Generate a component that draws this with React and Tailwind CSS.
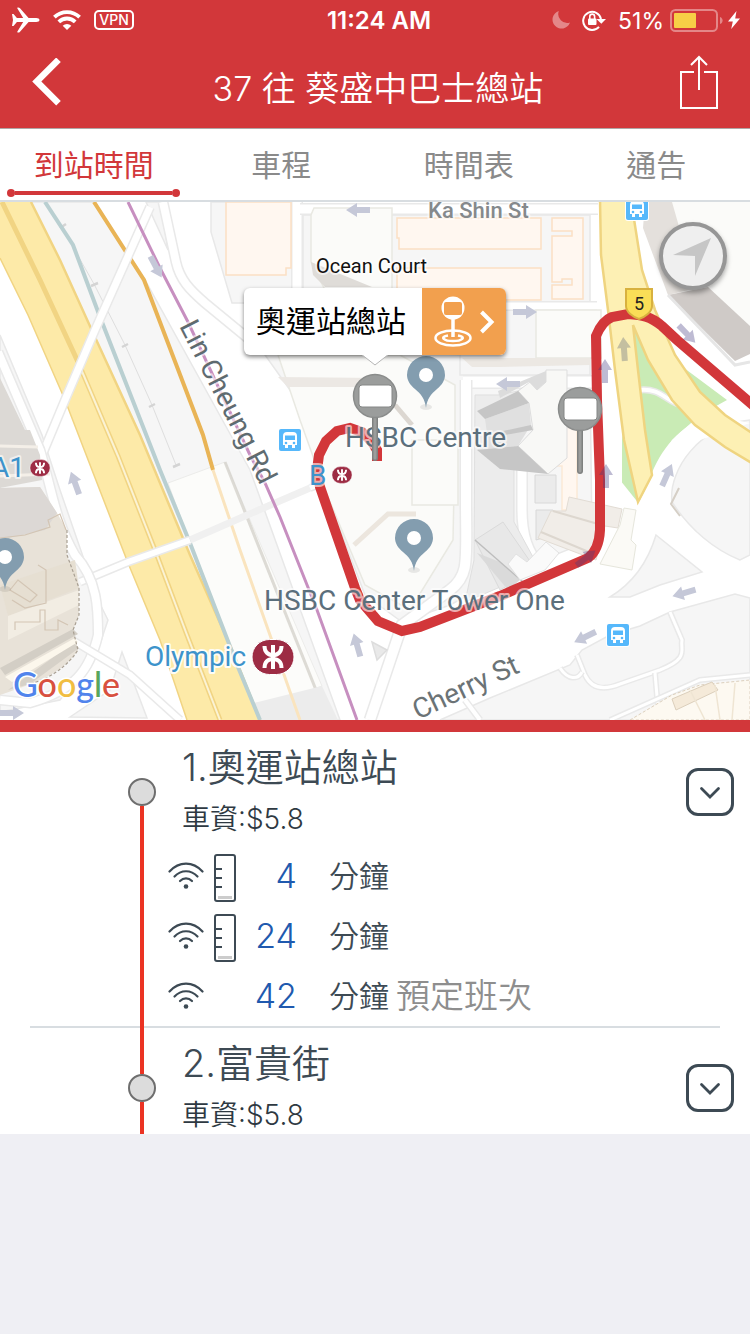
import React, { useState } from 'react';

const TABS = ['到站時間', '車程', '時間表', '通告'];

const STOPS = [
  {
    name: '1.奧運站總站',
    fare: '車資:$5.8',
    arrivals: [
      { minutes: 4, load: true, note: '' },
      { minutes: 24, load: true, note: '' },
      { minutes: 42, load: false, note: '預定班次' },
    ],
  },
  { name: '2.富貴街', fare: '車資:$5.8', arrivals: [] },
];

// Traffic direction arrows on the map: position and angle
const ARROWS = [
  { x: 358, y: 210, angle: 180 },
  { x: 156, y: 267, angle: 62 },
  { x: 525, y: 312, angle: 0 },
  { x: 508, y: 384, angle: 180 },
  { x: 75, y: 483, angle: -110 },
  { x: 357, y: 645, angle: -106 },
  { x: 12, y: 713, angle: 0 },
  { x: 667, y: 475, angle: -66 },
  { x: 684, y: 593, angle: 164 },
  { x: 585, y: 637, angle: 154 },
];

const ROUTE_ARROWS = [
  { x: 605, y: 371, angle: -90 },
  { x: 606, y: 476, angle: -90 },
  { x: 687, y: 334, angle: 46 },
  { x: 586, y: 558, angle: -38 },
];

/**
 * Status bar with time, network and battery
 */
const StatusBar = () => (
  <div className="grid h-10 grid-cols-3 items-center pl-3 pr-2 text-white">
    <div className="flex items-center">
      <svg className="h-[26px] w-[28px]" viewBox="0 0 28 26" fill="currentColor">
        <path d="M0 7h1.500l3.400 3.900 6.300.1L5.400 1.400C5 .6 5.400.4 6.200.4c.8 0 1.300.3 1.800.9l8.600 9.700h7.600c2 0 3.300.9 3.300 2s-1.300 2-3.300 2h-7.600L8 24.700c-.5.6-1 .9-1.800.9-.8 0-1.200-.2-.8-1L11.200 15l-6.300.1L1.500 19H0l1-6z" />
      </svg>
      <svg className="ml-[13px] h-[20px] w-[28px]" viewBox="0 0 28 20" fill="none" stroke="currentColor" strokeWidth="3.800">
        <path d="M1.400 7.200a18 18 0 0 1 25.200 0" />
        <path d="M5.800 11.800a11.800 11.800 0 0 1 16.400 0" />
        <path d="M14 20l-4.300-4.300a6.200 6.200 0 0 1 8.600 0z" fill="currentColor" stroke="none" />
      </svg>
      <span className="ml-[13px] flex h-5 w-10 items-center justify-center rounded-[5px] border-2 border-white text-sm font-medium">
        VPN
      </span>
    </div>
    <div className="pt-[2px] pl-1 whitespace-nowrap text-center text-[24px] leading-[32px] font-semibold">11:24 AM</div>
    <div className="flex items-center justify-end">
      <svg className="h-[18px] w-[18px] opacity-40" viewBox="0 0 18 18" fill="currentColor">
        <path d="M6.800 0A9 9 0 1 0 18 11.600 9 9 0 0 1 6.800 0z" />
      </svg>
      <svg className="ml-[12px] h-[22px] w-[24px]" viewBox="0 0 24 22" fill="none" stroke="currentColor" strokeWidth="2">
        <path d="M17 17.800A9 9 0 1 1 19 10" />
        <path d="M14.500 10H24l-4.700 4.800z" fill="currentColor" stroke="none" />
        <rect x="6" y="9.500" width="8.500" height="6.500" rx="1" fill="currentColor" stroke="none" />
        <path d="M7.800 10V7.500a2.400 2.400 0 0 1 4.800 0V10" strokeWidth="1.600" />
      </svg>
      <span className="ml-3 pt-[2px] text-[23px] leading-[32px]">51%</span>
      <svg className="ml-[6px] h-[23px] w-[54px]" viewBox="0 0 54 23">
        <rect x="1" y="1" width="46" height="21" rx="4.500" fill="none" stroke="white" strokeOpacity="0.4" strokeWidth="2" />
        <rect x="4" y="4" width="22" height="15" rx="1" fill="#f7cf46" />
        <path d="M50 8c3.500 1 3.500 6 0 7z" fill="white" fillOpacity="0.4" />
      </svg>
      <svg className="ml-1 mr-[2px] h-[18px] w-[12px]" viewBox="0 0 12 18" fill="currentColor">
        <path d="M8.500 0L0 10.500h4.800L3.200 18 12 7.500H7.200z" />
      </svg>
    </div>
  </div>
);

const NavBar = () => (
  <div className="flex h-[88px] items-center justify-between text-white">
    <button className="flex h-full w-24 items-center pb-[2px] pl-8" aria-label="返回">
      <svg className="h-[50px] w-[30px]" viewBox="0 0 30 50" fill="none" stroke="currentColor" strokeWidth="6.500">
        <path d="M26.500 1.800L4.800 23.500l21.700 21.700" />
      </svg>
    </button>
    <h1 className="pt-[10px] text-[34px] leading-[44px] font-[350]">37 往 葵盛中巴士總站</h1>
    <button className="flex h-full w-[90px] items-center justify-end pr-[30px] pb-1" aria-label="分享">
      <svg className="h-[54px] w-[42px]" viewBox="0 0 42 54" fill="none" stroke="currentColor" strokeWidth="2">
        <path d="M16 17H3v36h36V17H26" />
        <path d="M21 35V2M13 10l8-8 8 8" />
      </svg>
    </button>
  </div>
);

const TabBar = ({ active, onChange }) => (
  <nav className="grid grid-cols-4 border-t border-b-2 border-t-[#b0a6a6] border-b-[#d8dde1] bg-white" role="tablist">
    {TABS.map((tab, index) => (
      <button
        key={tab}
        role="tab"
        aria-selected={active === index}
        onClick={() => onChange(index)}
        className={`flex h-[71px] flex-col items-center justify-between pt-[13px] pb-1 text-[30px] leading-[47px] ${
          active === index ? 'text-[#d2373a]' : 'text-[#8a8a8a]'
        }`}
      >
        <span>{tab}</span>
        {active === index && (
          <span className="flex w-[173px] items-center">
            <span className="h-2 w-2 rounded-full bg-[#d2373a]"></span>
            <span className="h-1 flex-1 bg-[#d2373a]"></span>
            <span className="h-2 w-2 rounded-full bg-[#d2373a]"></span>
          </span>
        )}
      </button>
    ))}
  </nav>
);

const Arrow = ({ x, y, angle, fill }) => (
  <path transform={`translate(${x} ${y}) rotate(${angle})`} d="M-12 -3H1V-7L12 0L1 7V3H-12Z" fill={fill} />
);

const BusBadge = ({ x, y }) => (
  <g transform={`translate(${x} ${y})`}>
    <rect x="-12" y="-12" width="24" height="24" rx="3" fill="white" />
    <rect x="-11" y="-11" width="22" height="22" rx="2" fill="#56b8fb" />
    <path d="M-7 -4q0-4 4-4h6q4 0 4 4v9h-2v3h-3v-3h-4v3h-3v-3h-2z" fill="white" />
    <path d="M-5 -4.500H5V0H-5z" fill="#56b8fb" />
    <circle cx="-4" cy="3" r="1.300" fill="#56b8fb" />
    <circle cx="4" cy="3" r="1.300" fill="#56b8fb" />
  </g>
);

const PlacePin = ({ x, y }) => (
  <g transform={`translate(${x} ${y})`}>
    <ellipse cx="0" cy="32" rx="6" ry="3" fill="#000" opacity="0.08" />
    <path
      d="M0 33C-1 24 -5 19 -11 14C-16 10 -19 5 -19 0A19 19 0 0 1 19 0C19 5 16 10 11 14C5 19 1 24 0 33Z"
      fill="#839daf"
    />
    <circle cx="0" cy="0" r="7" fill="white" />
  </g>
);

const StopPin = ({ x, y }) => (
  <g transform={`translate(${x} ${y})`}>
    <path d="M0 20V62" stroke="#7f8180" strokeWidth="6" strokeLinecap="round" />
    <path d="M0 20V62" stroke="#9b9d9c" strokeWidth="3" strokeLinecap="round" />
    <circle r="21.500" fill="#9b9d9c" stroke="#8a8c8b" strokeWidth="1.500" />
    <rect x="-16" y="-11" width="33" height="22" rx="3" fill="white" stroke="#858786" />
  </g>
);

const MtrMark = ({ x, y, scale }) => (
  <g transform={`translate(${x} ${y}) scale(${scale})`}>
    <rect x="-21" y="-17.500" width="42" height="35" rx="17.500" fill="#9d2c44" stroke="white" strokeWidth="1" />
    <path
      d="M0 -12V12M-8.500 -11C-8.500 -5 -5 -2 0 -2S8.500 -5 8.500 -11M-8.500 11C-8.500 5 -5 2 0 2S8.500 5 8.500 11"
      fill="none"
      stroke="white"
      strokeWidth="4"
    />
  </g>
);

// White casing over a light grey edge, used for the small roads
const Road = ({ d, width = 8 }) => (
  <>
    <path d={d} fill="none" stroke="#e9e9e9" strokeWidth={width + 3} />
    <path d={d} fill="none" stroke="white" strokeWidth={width} />
  </>
);

/**
 * Map artwork
 */
const MapDrawing = () => (
  <svg className="block h-full w-full" viewBox="0 202 750 518" preserveAspectRatio="xMidYMid slice" role="img" aria-label="地圖">
    <rect x="0" y="202" width="750" height="518" fill="#ffffff" />

    {/* Land blocks */}
    <g fill="#f6f6f6" stroke="#e8e8e8" strokeWidth="1.500">
      <path d="M31 202H95L145 280L250 470L340 720H250L155 470L94 335Z" />
      <path d="M0 335L42 435L60 490L98 600L108 620L98 650L60 700L0 712Z" />
      <path d="M70 717L110 690L122 652L147 718Z" />
      <path d="M211 202V232L232 303H294V202Z" />
      <path d="M146 202H160L168 250Z" />
      <path d="M303 215H590V303H303Z" />
      <path d="M303 310H590V376H460L303 350Z" />
      <path d="M265 355L303 345L460 355V375H590L592 540L505 575L450 605L402 622L365 595L325 490L325 440L290 390Z" />
      <path d="M750 420C700 425 668 470 672 502C690 530 715 550 740 560L750 555Z" />
      <path d="M656 535L702 572L660 585L630 597H610C638 580 650 555 656 535Z" />
      <path d="M750 598L735 594L670 612L640 626L610 635L582 650L570 665L490 698L440 720H750Z" />
    </g>
    <path d="M633 330L727 400L700 415L672 440L650 480L640 500L622 510V440Z" fill="#c9ebb5" />
    <path d="M750 423L700 440C672 455 662 485 640 525L600 560L620 480L640 505L650 478C660 450 680 425 710 415Z" fill="white" />

    {/* Station building west of the road */}
    <path d="M168 483L225 462L322 686L282 700L250 704Z" fill="#fcfcfa" stroke="#ececea" />
    <path d="M225 462L328 720" stroke="#d5d2cc" strokeWidth="3" strokeOpacity="0.8" fill="none" />
    <path d="M322 686L338 720H260L250 704Z" fill="#ececec" />

    {/* Highway */}
    <path
      d="M0 202H31L60 260L94 335L140 435L190 555L232 650L260 720H187L160 640L128 563L92 470L65 400L28 315L0 258Z"
      fill="#fdeaa8"
    />
    <g fill="none" stroke="#f1d483" strokeWidth="2.500">
      <path d="M31 202L60 260L94 335L140 435L190 555L232 650L260 720" />
      <path d="M0 258L28 315L65 400L92 470L128 563L160 640L187 720" strokeWidth="1.500" />
      <path d="M2 202L40 280L78 362L118 456L155 550L187 635L220 720" strokeWidth="5" />
      <path d="M78 362L118 456L155 550L187 635L220 720" stroke="#fbf3d4" strokeWidth="2" />
    </g>
    <path d="M45 202L64 231L94 284L125 345L152 405L176 465" stroke="#dedede" strokeWidth="1" fill="none" />
    <path d="M60 228L66 224M91 286L98 283M122 347L128 344M149 407L155 404M173 467L180 464" stroke="#d4d4d4" strokeWidth="2.500" />
    <path d="M45 202L73 245L100 317L160 470L190 543L238 667L260 720" stroke="#b9cfd1" strokeWidth="4" fill="none" />
    <path d="M94 202L144 280L163 330L203 435L213 470" stroke="#e9b456" strokeWidth="4" fill="none" />
    <path d="M213 470L240 550L300 720" stroke="#fae4be" strokeWidth="3" fill="none" />

    {/* Foot bridges and small roads */}
    <Road d="M150 207L95 330L65 400L40 460" width={7} />
    <Road d="M80 582L128 562L190 540" width={6} />
    <path d="M190 540L245 516L310 488" stroke="#f0f0f0" strokeWidth="7" fill="none" />
    <Road d="M310 488L345 475L412 471" width={5} />
    <Road d="M163 202L176 262C180 280 190 290 205 303L250 340" width={8} />
    <Road d="M-2 352L40 450C52 490 55 520 75 555C98 580 98 610 98 635C90 670 75 690 30 703L0 700" width={8} />
    <Road d="M72 640L130 675L180 720" width={6} />
    <Road d="M297 202V320" width={9} />
    <Road d="M300 209H598" width={9} />
    <Road d="M270 306H597" width={7} />
    <Road d="M463 382H592" width={11} />
    <Road d="M466 380V500C466 560 470 575 450 590L402 625L370 720" width={10} />
    <Road d="M522 460V510C522 540 530 555 540 565" width={9} />
    <Road d="M577 655L585 675C592 690 605 690 620 684L660 670C690 658 680 650 682 640L670 612" width={3} />
    <Road d="M655 673L658 708" width={3} />
    <Road d="M610 720L700 680L750 675" width={3} />
    <Road d="M560 668C568 680 578 680 582 672" width={3} />
    <Road d="M465 700L480 720" width={4} />
    <Road d="M640 390C665 388 665 405 690 406" width={4} />
    <path d="M128 202L160 268L188 322L250 455L265 483L280 517L317 610L357 720" stroke="#c78fc0" strokeWidth="3" fill="none" />

    {/* Buildings */}
    <g fill="#fff7f0" stroke="#fbe0c4" strokeWidth="1.500">
      <path d="M226 202H291V268H286V275H226Z" />
      <path d="M397 218H541V249H399V238H397Z" />
      <path d="M397 268H541V300H397Z" />
      <path d="M552 218H583V299H552V285H572V279H562V282H552V236H572V231H552Z" />
      <path d="M538 402H577V510H562V466H538Z" strokeOpacity="0.6" />
    </g>
    <g fill="#fbfbf9" stroke="#e9e9e2" strokeWidth="1.500">
      <path d="M314 208H392V290H325L311 262V215Z" />
      <path d="M278 355H400L455 385V440L453 540L410 610L365 585L325 490L300 420Z" />
      <path d="M412 440H458V505H412Z" />
      <path d="M536 310H601V358H536Z" />
    </g>
    <path d="M311 262L372 287H325L313 275Z" fill="#dfdcd8" />
    <path d="M278 377L380 378V387H288Z" fill="#ece8e4" />
    <path d="M354 545L388 514H416" stroke="#ece6de" strokeWidth="5" fill="none" />
    <path d="M395 405L412 425" stroke="#dcd7d1" strokeWidth="5" />
    <path d="M462 358H590V365L500 367H472Z" fill="#ece8e3" />

    {/* Towers */}
    <path d="M475 395H498L518 391L514 460V522L540 570L505 585L465 602L474 560Z" fill="#ececec" stroke="#dfdfdf" />
    <path d="M530 382L537 390L546 382V370H567V458L548 474L518 446L533 430L529 403L518 391Z" fill="#f8f8f6" stroke="#dddddd" />
    <path d="M498 391L546 371V382L537 390L529 382L500 398Z" fill="#dcdcdc" />
    <path d="M485 419L529 403L531 425L518 446L477 450L488 440Z" fill="#e0e0e0" />
    <g fill="#c6c6c6">
      <path d="M477 411L518 391L529 403L485 419Z" />
      <path d="M503 431L531 425L533 430L505 435Z" />
      <path d="M477 450L518 446L548 474L500 469Z" />
    </g>
    <path d="M475 540L503 522L536 570L500 590Z" fill="#e8e8e8" stroke="#dadada" />
    <path d="M477 553L500 562L520 580L508 590Z" fill="#dadada" />
    <path d="M475 540L523 582" stroke="#bdbdbd" strokeWidth="1.500" />
    <path d="M508 564L516 554L527 562L546 542L559 553L545 570L520 580Z" fill="#fafafa" stroke="#e2e2e2" />
    <path d="M535 475H556V503H535ZM536 510H553V535L536 540Z" fill="#ebebeb" stroke="#d8d8d8" />
    <path d="M569 497L622 509L618 528L605 526L596 560L538 538L551 511H566Z" fill="#f1ede8" stroke="#e2dcd4" />
    <path d="M624 508L636 510L631 540L636 545L632 570L600 564L620 525Z" fill="#fbfaf6" stroke="#e6e6dc" />
    <path d="M541 532L596 555M553 511L605 526" stroke="#ddd7cf" strokeWidth="2" />
    <path d="M679 488L671 504L680 516" stroke="#d5cfc6" strokeWidth="2" fill="none" />

    {/* North east block */}
    <path d="M643 202H750V326L735 361L668 295L648 240Z" fill="#fbfbf9" />
    <path d="M645 202H672L680 230L710 285L668 295L643 228Z" fill="#e4e0dc" />
    <path d="M668 295L708 287L750 326V354L735 361Z" fill="#cfcac7" />
    <path d="M668 295L735 365L750 362" stroke="#e6e6e6" strokeWidth="3" fill="none" />

    {/* South east block */}
    <path d="M630 720L672 695L700 685L750 680V720Z" fill="#fdf9f1" stroke="#dccfbc" strokeDasharray="3 2" />
    <path d="M672 699L700 687L712 682L718 690L676 710Z" fill="#f5ead9" stroke="#dccfbc" />
    <path d="M690 690L705 720M715 685L720 720M735 683L732 720" stroke="#efe5d3" strokeWidth="1.500" />

    {/* West block */}
    <path d="M0 378L25 430H30L40 455L42 480L0 488Z" fill="#dcd9d5" />
    <path d="M0 446L38 447M0 476L50 474" stroke="#f4efe8" strokeWidth="3" />
    <path d="M0 488L40 487L57 513L67 530V555L79 588V615L73 630L78 650C65 670 45 680 0 695Z" fill="#e8e2d8" />
    <path d="M0 488L40 487L57 513L45 530L0 540Z" fill="#dcd8d5" />
    <path d="M0 585L75 560L79 588L8 616Z" fill="#e6dfd2" />
    <path d="M8 616L79 590V605L8 640Z" fill="#f2ede3" />
    <path d="M0 668L73 629L78 634L5 675Z" fill="#d3cec5" />
    <path d="M8 690L73 643L79 648L30 684Z" fill="#d6d1c8" />
    <path d="M5 677L75 638L78 642L12 682Z" fill="#fcf7ec" />
    <g fill="none" stroke="#d3c5b4" strokeWidth="1.200">
      <path d="M0 538L25 535L50 527L48 520L60 514L66 530" />
      <path d="M10 590L18 580L37 595L30 602ZM38 565L46 570V603L25 608L12 600" />
      <path d="M15 630V622H40V610H45V630H58V620L68 625" />
      <path d="M67 530V555L79 588V615L73 630L78 650C65 670 45 680 30 684" strokeDasharray="3 2" stroke="#a89f92" />
    </g>

    {/* Route 5 */}
    <g fill="#fdf0b4" stroke="#efd480" strokeWidth="2.500">
      <path d="M600 200L601 255L608 310L615 370L624 440L638 502L652 475L645 430L638 370L633 325L648 360L672 400L695 425L725 447L755 465V435L725 415L700 392L675 355L655 310L642 270L631 200Z" />
    </g>

    {ARROWS.map((a) => (
      <Arrow key={`${a.x}-${a.y}`} {...a} fill="#c5c8d8" />
    ))}
    <Arrow x={624} y={349} angle={-94} fill="#c4bfa0" />
    <path d="M372 642L387 650L377 660Z" fill="#e9e9e9" stroke="#dddddd" strokeWidth="1.500" />

    {/* Bus route */}
    <path
      d="M755 407L677 340L662 326C650 316 642 315 628 314L612 317Q602 321 596 336L597 400L600 480V530Q599 550 588 558L500 596L420 627L402 631L378 621L360 600L355 588L320 487L317 470L319 455L326 441L337 431L350 428L362 432L372 442L377 450V461"
      fill="none"
      stroke="#d2373a"
      strokeWidth="10"
    />
    {ROUTE_ARROWS.map((a) => (
      <Arrow key={`${a.x}-${a.y}`} {...a} fill="rgba(70,60,130,0.35)" />
    ))}

    <BusBadge x={637} y={209} />
    <BusBadge x={290} y={440} />
    <BusBadge x={618} y={635} />

    <path d="M626 289H652V306C652 312 645 317 639 319C633 317 626 312 626 306Z" fill="#fade57" stroke="#d8b13f" strokeWidth="2" />
    <text x="639" y="310" textAnchor="middle" fontSize="18" fill="#222222">5</text>

    {/* Labels */}
    <g fill="#5b6f7c" stroke="white" strokeOpacity="0.6" strokeWidth="4" strokeLinejoin="round" paintOrder="stroke">
      <text x="428" y="218" fontSize="22" fill="#85898c" fontWeight="500">Ka Shin St</text>
      <text x="316" y="273" fontSize="20" fill="#111111">Ocean Court</text>
      <text x="345" y="447" fontSize="28">HSBC Centre</text>
      <text x="264" y="610" fontSize="28">HSBC Center Tower One</text>
      <text x="145" y="666" fontSize="28" fill="#3d93cb" strokeOpacity="0.9">Olympic</text>
      <text x="-9" y="477" fontSize="28" fill="#3d93cb">A1</text>
      <text x="309" y="485" fontSize="28" fill="#3d93cb">B</text>
      <text transform="translate(179 326) rotate(63)" fontSize="28" fill="#5f6b70">Lin Cheung Rd</text>
      <text transform="translate(418 720) rotate(-25)" fontSize="28" fill="#6b7376">Cherry St</text>
    </g>

    <MtrMark x={273} y={657} scale={1} />
    <MtrMark x={40} y={468} scale={0.48} />
    <MtrMark x={342} y={475} scale={0.48} />

    <PlacePin x={426} y={375} />
    <PlacePin x={414} y={538} />
    <PlacePin x={5} y={557} />
    <StopPin x={375} y={396} />
    <StopPin x={580} y={409} />

    <text x="13" y="697" fontSize="34" fontWeight="500" className="font-['Lato',sans-serif]" stroke="white" strokeWidth="3" paintOrder="stroke">
      <tspan fill="#5184ec">G</tspan>
      <tspan fill="#d85140">o</tspan>
      <tspan fill="#f1be42">o</tspan>
      <tspan fill="#5184ec">g</tspan>
      <tspan fill="#58a65c">l</tspan>
      <tspan fill="#d85140">e</tspan>
    </text>
  </svg>
);

const RouteMap = () => (
  <div className="relative aspect-[750/518] w-full overflow-hidden font-['Roboto',sans-serif]">
    <MapDrawing />

    {/* Stop callout */}
    <button className="absolute top-[86px] left-1/2 flex h-[67px] -translate-x-1/2 rounded-md bg-white font-['Inter','Noto_Sans_CJK_TC',sans-serif] shadow-[0_2px_4px_rgba(0,0,0,0.5)]">
      <span className="pr-4 pl-3 text-[30px] leading-[66px] whitespace-nowrap text-black">奧運站總站</span>
      <span className="flex h-full w-[84px] items-center justify-center gap-[7px] rounded-r-md bg-[#f2a04e]">
        <svg className="h-[52px] w-[38px]" viewBox="0 0 38 52" fill="none" stroke="white" strokeWidth="2.500">
          <circle cx="19" cy="12" r="11.500" fill="white" stroke="none" />
          <rect x="10" y="6" width="18" height="13" rx="2" fill="#f2a04e" stroke="none" />
          <path d="M19 22V41" strokeWidth="3.500" />
          <ellipse cx="19" cy="42" rx="17.500" ry="7.500" />
          <path d="M14 39.500C5 41 10 45 19 45S33 41 24 39.500" />
        </svg>
        <svg className="h-6 w-4" viewBox="0 0 16 24" fill="none" stroke="white" strokeWidth="4">
          <path d="M2.500 2L12.500 12L2.500 22" />
        </svg>
      </span>
      <svg className="absolute top-[66px] left-1/2 h-3 w-[28px] -translate-x-1/2" viewBox="0 0 28 12">
        <path d="M0 0L14 11L28 0" fill="white" stroke="#b5b5b5" />
        <path d="M0 0H28" stroke="white" strokeWidth="2" />
      </svg>
    </button>

    <button
      className="absolute top-[20px] right-[23px] flex h-[68px] w-[68px] items-center justify-center rounded-full border-4 border-[#969696] bg-[#efefef] shadow-[0_3px_5px_rgba(0,0,0,0.35)]"
      aria-label="我的位置"
    >
      <svg className="h-10 w-10" viewBox="0 0 40 40" fill="#c6c6c6">
        <path d="M38 2L0 19L22 20L22 40Z" />
      </svg>
    </button>
  </div>
);

const SignalIcon = () => (
  <svg className="h-7 w-9" viewBox="0 0 36 28" fill="none" stroke="#3d4a54" strokeWidth="2.200" strokeLinecap="round">
    <path d="M1.500 9.500C11 -1 25 -1 34.500 9.500" />
    <path d="M6.500 14.500C13 7.500 23 7.500 29.500 14.500" />
    <path d="M12 19C15.500 15.500 20.500 15.500 24 19" />
    <circle cx="18" cy="24.500" r="2.300" fill="#3d4a54" stroke="none" />
  </svg>
);

const LoadIcon = () => (
  <svg className="h-12 w-6" viewBox="0 0 24 48" fill="none" stroke="#3d4a54" strokeWidth="2">
    <rect x="2" y="1" width="20" height="46" rx="2" />
    <path d="M2 15H9M2 24H9M2 33H9" />
    <path d="M5 43.500H19" stroke="#cccccc" strokeWidth="3" />
  </svg>
);

const StopItem = ({ stop, first, last }) => (
  <li className="relative flex">
    {/* Row divider, runs under the timeline */}
    {!last && <div className="absolute right-[30px] bottom-0 left-[30px] h-[2px] bg-[#d8dde1]"></div>}

    <div className="relative ml-32 flex w-7 flex-col items-center">
      <div className={`h-[46px] w-1 ${first ? 'bg-transparent' : 'bg-[#eb3323]'}`}></div>
      <div className="h-7 w-7 shrink-0 rounded-full border-2 border-[#6e6e6e] bg-[#dcdcdc]"></div>
      <div className="w-1 flex-1 bg-[#eb3323]"></div>
    </div>

    <div className="flex-1 pl-3 text-[#3d4a54]">
      <h2 className="pt-[10px] pl-[14px] text-[38px] leading-[50px] font-[350]">{stop.name}</h2>
      <p className="pt-2 pl-[14px] text-[28px] leading-[38px] font-[350] text-[#2e3942]">{stop.fare}</p>
      {stop.arrivals.length > 0 && (
        <ul className="pt-2 pb-[2px]">
          {stop.arrivals.map((arrival) => (
            <li key={arrival.minutes} className="flex h-[60px] items-center">
              <SignalIcon />
              <span className="ml-[9px] w-6 pt-1">{arrival.load && <LoadIcon />}</span>
              <span className="w-[60px] text-right text-[34px] leading-[44px] font-[350] text-[#2059ae]">{arrival.minutes}</span>
              <span className="ml-8 text-[30px] leading-[44px] font-[350]">分鐘</span>
              <span className="ml-[7px] text-[34px] leading-[44px] font-[350] text-[#8e8e8e]">{arrival.note}</span>
            </li>
          ))}
        </ul>
      )}
    </div>

    <button
      className="mt-9 mr-4 flex h-12 w-12 shrink-0 items-center justify-center rounded-xl border-3 border-[#3d4a54]"
      aria-label={`展開 ${stop.name}`}
    >
      <svg className="h-4 w-6" viewBox="0 0 24 16" fill="none" stroke="#3d4a54" strokeWidth="2.800" strokeLinecap="round">
        <path d="M3.500 4.500L12 13L20.500 4.500" />
      </svg>
    </button>
  </li>
);

const App = () => {
  const [activeTab, setActiveTab] = useState(0);

  return (
    <div className="min-h-screen bg-[#efeff4] font-['Inter','Noto_Sans_CJK_TC',sans-serif]">
      <header className="bg-[#d2373a]">
        <StatusBar />
        <NavBar />
      </header>
      <TabBar active={activeTab} onChange={setActiveTab} />
      <main>
        <RouteMap />
        <div className="h-3 bg-[#d2373a]"></div>
        <ol className="bg-white">
          {STOPS.map((stop, index) => (
            <StopItem key={stop.name} stop={stop} first={index === 0} last={index === STOPS.length - 1} />
          ))}
        </ol>
      </main>
    </div>
  );
};

export default App;
